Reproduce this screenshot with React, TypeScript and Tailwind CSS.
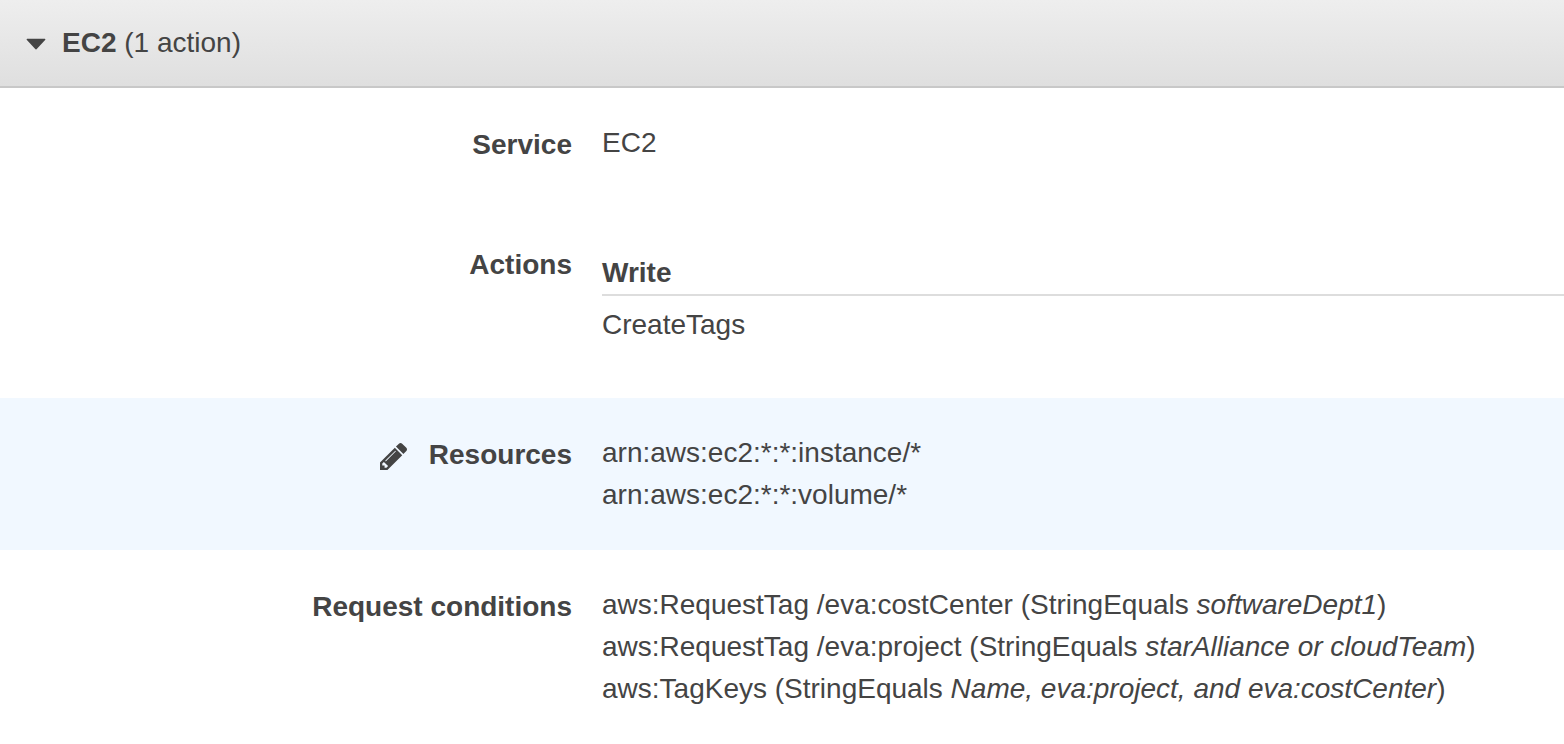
import type { ReactNode } from "react";

type RowProps = { label: string; children: ReactNode; className: string; action?: ReactNode };

function Row({ label, children, className, action }: RowProps) {
  return (
    <div className={`flex gap-[30px] ${className}`}>
      <dt className="flex w-[572px] shrink-0 items-start justify-end gap-[22px] pt-0.5 font-bold">
        {action}
        {label}
      </dt>
      <dd className="min-w-0 flex-1">{children}</dd>
    </div>
  );
}

function PencilIcon() {
  return (
    <svg className="w-[27px]" viewBox="128 149 1515 1515" fill="currentColor" aria-hidden="true">
      <path d="M491 1536l91-91-235-235-91 91v107h128v128h107zm523-928q0-22-22-22-10 0-17 7l-542 542q-7 7-7 17 0 22 22 22 10 0 17-7l542-542q7-7 7-17zm-54-192l416 416-832 832h-416v-416zm683 96q0 53-37 90l-166 166-416-416 166-165q36-38 90-38 53 0 91 38l235 234q37 39 37 91z" />
    </svg>
  );
}

export default function App() {
  return (
    <main className="bg-white font-['Liberation_Sans',sans-serif] text-[28px] leading-[42px] text-[#444]">
      <h2 className="border-b-2 border-[#c8c8c8] bg-linear-to-b from-[#eeeeee] to-[#dfdfdf]">
        <button type="button" aria-expanded="true" className="flex w-full items-center gap-4 px-[26px] py-[22px] text-left">
          <svg className="w-5" viewBox="0 0 20 14" fill="currentColor" aria-hidden="true">
            <path d="M1.2 2.8H18.8Q20 3 19.1 4.1L11 12.8Q10 14 9 12.8L.9 4.1Q0 3 1.2 2.8Z" />
          </svg>
          <span>
            <strong>EC2</strong> (1 action)
          </span>
        </button>
      </h2>
      <dl>
        <Row label="Service" className="pt-[34px] pb-[76px]">EC2</Row>
        <Row label="Actions" className="pb-[52px]">
          <h3 className="border-b-2 border-[#ddd] pt-2.5 font-bold">Write</h3>
          <p className="pt-2">CreateTags</p>
        </Row>
        <Row
          label="Resources"
          className="bg-[#f1f8ff] py-[34px]"
          action={
            <button type="button" aria-label="Edit resources" className="pt-[9px]">
              <PencilIcon />
            </button>
          }
        >
          <p>arn:aws:ec2:*:*:instance/*</p>
          <p>arn:aws:ec2:*:*:volume/*</p>
        </Row>
        <Row label="Request conditions" className="py-[34px]">
          <p>aws:RequestTag /eva:costCenter (StringEquals <em>softwareDept1</em>)</p>
          <p>aws:RequestTag /eva:project (StringEquals <em>starAlliance or cloudTeam</em>)</p>
          <p>aws:TagKeys (StringEquals <em>Name, eva:project, and eva:costCenter</em>)</p>
        </Row>
      </dl>
    </main>
  );
}
